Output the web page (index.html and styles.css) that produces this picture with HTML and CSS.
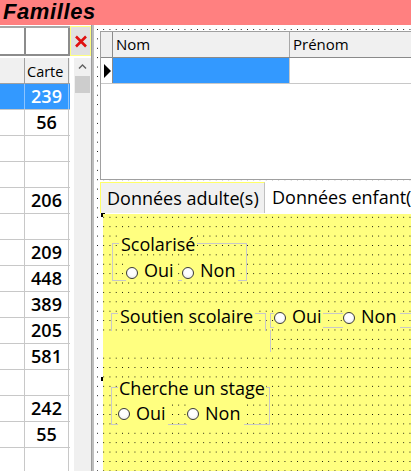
FILE: index.html
```html
<!DOCTYPE html>
<html lang="fr">
<head>
<meta charset="utf-8">
<title>Familles</title>
<link rel="stylesheet" href="styles.css">
</head>
<body>
<div class="header"><span class="title">Familles</span></div>
<div class="main">
  <div class="left">
    <div class="toolbar">
      <div class="tb1"></div>
      <div class="tb2"></div>
      <div class="tbbtn">
        <svg width="14" height="13" viewBox="0 0 14 13"><path d="M2 1.5 L12 11.5 M12 1.5 L2 11.5" stroke="#e01010" stroke-width="2.6" fill="none"/></svg>
      </div>
    </div>
    <div class="listwrap">
      <div class="list">
        <div class="lrow head"><div class="s"></div><div class="n">Carte</div></div>
        <div class="lrow sel"><div class="s"></div><div class="n">239</div></div>
        <div class="lrow"><div class="s"></div><div class="n">56</div></div>
        <div class="lrow"><div class="s"></div><div class="n"></div></div>
        <div class="lrow"><div class="s"></div><div class="n"></div></div>
        <div class="lrow"><div class="s"></div><div class="n">206</div></div>
        <div class="lrow"><div class="s"></div><div class="n"></div></div>
        <div class="lrow"><div class="s"></div><div class="n">209</div></div>
        <div class="lrow"><div class="s"></div><div class="n">448</div></div>
        <div class="lrow"><div class="s"></div><div class="n">389</div></div>
        <div class="lrow"><div class="s"></div><div class="n">205</div></div>
        <div class="lrow"><div class="s"></div><div class="n">581</div></div>
        <div class="lrow"><div class="s"></div><div class="n"></div></div>
        <div class="lrow"><div class="s"></div><div class="n">242</div></div>
        <div class="lrow"><div class="s"></div><div class="n">55</div></div>
        <div class="lrow"><div class="s"></div><div class="n"></div></div>
      </div>
      <div class="vscroll">
        <svg class="arrow" width="17" height="17" viewBox="0 0 17 17"><path d="M5 10.5 L8.5 7 L12 10.5" stroke="#606060" stroke-width="1.4" fill="none"/></svg>
        <div class="thumb"></div>
      </div>
    </div>
  </div>
  <div class="divider"></div>
  <div class="design">
    <div class="subform">
      <div class="dshead"><div class="dsel"></div><div class="dnom">Nom</div><div class="dpren">Prénom</div></div>
      <div class="dsrow"><div class="dsel"><span class="tri"></span></div><div class="dnom cur"></div><div class="dpren"></div></div>
    </div>
    <div class="tabctl">
      <div class="tabs">
        <div class="tab active">Données adulte(s)</div>
        <div class="tab">Données enfant(s)</div>
      </div>
      <div class="pagewrap">
        <span class="handle h1"></span>
        <span class="handle h2"></span>
        <div class="page">
          <div class="frame f-scol"></div>
          <span class="lbl l-scol">Scolarisé</span>
          <div class="opt o-scol-oui"><span class="radio"></span><span>Oui</span></div>
          <div class="opt o-scol-non"><span class="radio"></span><span>Non</span></div>

          <div class="plain p-sout"></div>
          <div class="frame f-sout"></div>
          <div class="vline v-sout"></div>
          <div class="frame f-sout2"></div>
          <span class="lbl l-sout">Soutien scolaire</span>
          <div class="opt o-sout-oui"><span class="radio"></span><span>Oui</span></div>
          <div class="opt o-sout-non"><span class="radio"></span><span>Non</span></div>

          <div class="frame f-cher"></div>
          <span class="lbl l-cher">Cherche un stage</span>
          <div class="opt o-cher-oui"><span class="radio"></span><span>Oui</span></div>
          <div class="opt o-cher-non"><span class="radio"></span><span>Non</span></div>
        </div>
      </div>
    </div>
  </div>
</div>
</body>
</html>
```
FILE: styles.css
```css
* { box-sizing: border-box; }
html, body { margin: 0; padding: 0; }
body {
  width: 411px;
  height: 471px;
  overflow: hidden;
  background: #fff;
  color: #000;
  font-family: "Open Sans", "Noto Sans", sans-serif;
}

.header {
  height: 25px;
  background: #ff8080;
  padding-left: 3px;
}
.title {
  display: block;
  font-family: "Liberation Sans", Arial, sans-serif;
  font-weight: bold;
  font-style: italic;
  font-size: 22px;
  line-height: 24px;
  letter-spacing: 0.6px;
  white-space: nowrap;
}

.main { display: flex; height: 446px; }

/* left list panel */
.left { width: 91px; flex: none; display: flex; flex-direction: column; }
.toolbar {
  display: flex;
  height: 30px;
  margin-top: 1px;
  border-top: 2px solid #a8a8a8;
  border-bottom: 2px solid #8c8c8c;
}
.tb1 { width: 26px; border-right: 2px solid #8c8c8c; }
.tb2 { width: 44px; border-right: 2px solid #8c8c8c; }
.tbbtn {
  flex: 1;
  margin-top: -2px;
  margin-bottom: -2px;
  background: #e1e1e1;
  border: 1px solid #ffff80;
  display: flex;
  align-items: center;
  justify-content: center;
}
.listwrap { display: flex; flex: 1; min-height: 0; margin-top: 2px; }
.list { width: 70px; flex: none; }
.lrow { display: flex; height: 26px; border-bottom: 1px solid #c8c8c8; }
.lrow .s { width: 25px; border-right: 1px solid #c8c8c8; }
.lrow .n {
  width: 44px;
  border-right: 1px solid #c8c8c8;
  text-align: center;
  font-size: 18px;
  font-weight: 600;
  line-height: 25px;
}
.lrow.head { background: #f0f0f0; border-bottom-color: #a0a0a0; }
.lrow.head .s, .lrow.head .n { border-right-color: #a0a0a0; }
.lrow.head .n {
  font-size: 14.5px;
  font-weight: 400;
  text-align: left;
  padding: 1px 0 0 2px;
}
.lrow.sel { background: #3399ff; color: #fff; }
.lrow.sel .s, .lrow.sel .n { border-right-color: #8cc4ff; }

.vscroll {
  width: 17px;
  margin-left: 4px;
  background: #f0f0f0;
  display: flex;
  flex-direction: column;
  align-items: center;
}
.arrow { display: block; }
.thumb { width: 15px; height: 17px; margin-top: 1px; background: #cdcdcd; }

.divider {
  width: 3px;
  flex: none;
  background: #bdbdbd;
  border-left: 1px solid #9b9b9b;
}

/* design surface with grid dots */
.design {
  flex: 1;
  min-width: 0;
  display: flex;
  flex-direction: column;
  background-color: #fff;
  background-image: conic-gradient(from 270deg at 1px 1px, #000 90deg, transparent 0);
  background-size: 6.25px 9.4px;
  background-position: 97px 29px;
  background-attachment: fixed;
}

.subform {
  margin: 6px 0 0 6px;
  height: 149px;
  background: #fff;
  border: 1px solid #a0a0a0;
  border-right: 0;
  display: flex;
  flex-direction: column;
}
.dshead {
  display: flex;
  height: 26px;
  background: #f0f0f0;
  border-bottom: 1px solid #8a8a8a;
  font-size: 15px;
  line-height: 25px;
}
.dsrow { display: flex; height: 26px; border-bottom: 1px solid #c8c8c8; }
.dsel {
  width: 12px;
  flex: none;
  border-right: 1px solid #8a8a8a;
  display: flex;
  align-items: center;
  justify-content: center;
}
.dnom { width: 177px; flex: none; border-right: 1px solid #a8a8a8; padding-left: 3px; }
.dsrow .dnom { border-right-color: #c8c8c8; }
.dpren { flex: 1; padding-left: 3px; }
.dnom.cur { background: #3399ff; }
.tri {
  width: 0;
  height: 0;
  border-left: 7px solid #000;
  border-top: 7px solid transparent;
  border-bottom: 7px solid transparent;
  margin-left: 1px;
}

.tabctl {
  margin: 2px 0 0 6px;
  flex: 1;
  display: flex;
  flex-direction: column;
  overflow: hidden;
}
.tabs { display: flex; height: 31px; flex: none; font-size: 18px; }
.tab {
  padding: 0 7px;
  line-height: 30px;
  white-space: nowrap;
  background: #fff;
}
.tab.active {
  width: 165px;
  flex: none;
  background: #f0f0f0;
  border-top: 1px solid #ffff66;
  border-left: 1px solid #ffff66;
  border-right: 1px solid #c0c0c0;
  padding-left: 6px;
}

.pagewrap {
  flex: 1;
  position: relative;
  background: #fff;
  padding: 1px 0 0 3px;
}
.handle { position: absolute; width: 4px; height: 4px; background: #000; left: 1px; }
.h1 { top: 0; }
.h2 { top: 164px; }

.page {
  height: 100%;
  position: relative;
  background-color: #ffff80;
  background-image: conic-gradient(from 270deg at 1px 1px, #000 90deg, transparent 0);
  background-size: 6.25px 9.4px;
  background-position: 97px 29px;
  background-attachment: fixed;
  font-size: 18px;
}

.frame { position: absolute; border: 1px solid #c8c8c8; }
.vline { position: absolute; border-left: 1px solid #c8c8c8; }
.plain { position: absolute; background: #ffff80; }
.lbl {
  position: absolute;
  line-height: 20px;
  background: #ffff80;
  padding: 0 2px;
  white-space: nowrap;
}
.opt {
  position: absolute;
  display: flex;
  align-items: flex-start;
  gap: 6px;
  height: 22px;
  background: #ffff80;
  font-size: 18px;
  line-height: 20px;
  white-space: nowrap;
}
.radio {
  width: 12px;
  height: 12px;
  flex: none;
  border-radius: 50%;
  border: 1px solid #3a3a3a;
  background: radial-gradient(circle at 50% 40%, #ffffff 40%, #e4e4e4 100%);
}

/* Scolarisé */
.f-scol { left: 9px; top: 29px; width: 135px; height: 38px; }
.l-scol { left: 16px; top: 20px; }
.o-scol-oui { left: 23px; top: 46px; width: 52px; }
.o-scol-non { left: 79px; top: 46px; width: 56px; }
.o-scol-oui .radio, .o-scol-non .radio { margin-top: 7px; }

/* Soutien scolaire */
.p-sout { left: 0; top: 119px; width: 167px; height: 19px; }
.f-sout { left: 8px; top: 99px; width: 155px; height: 18px; border-bottom: 0; }
.v-sout { left: 167px; top: 116px; height: 22px; }
.f-sout2 { left: 167px; top: 99px; width: 160px; height: 15px; border-right: 0; }
.l-sout { left: 15px; top: 92px; }
.o-sout-oui { left: 171px; top: 92px; width: 49px; }
.o-sout-non { left: 240px; top: 92px; width: 57px; }
.o-sout-oui .radio, .o-sout-non .radio { margin-top: 6px; }

/* Cherche un stage */
.f-cher { left: 8px; top: 173px; width: 159px; height: 38px; }
.l-cher { left: 15px; top: 164px; padding: 0 1px; }
.o-cher-oui { left: 15px; top: 189px; width: 50px; }
.o-cher-non { left: 84px; top: 189px; width: 57px; }
.o-cher-oui .radio, .o-cher-non .radio { margin-top: 5px; }
```
